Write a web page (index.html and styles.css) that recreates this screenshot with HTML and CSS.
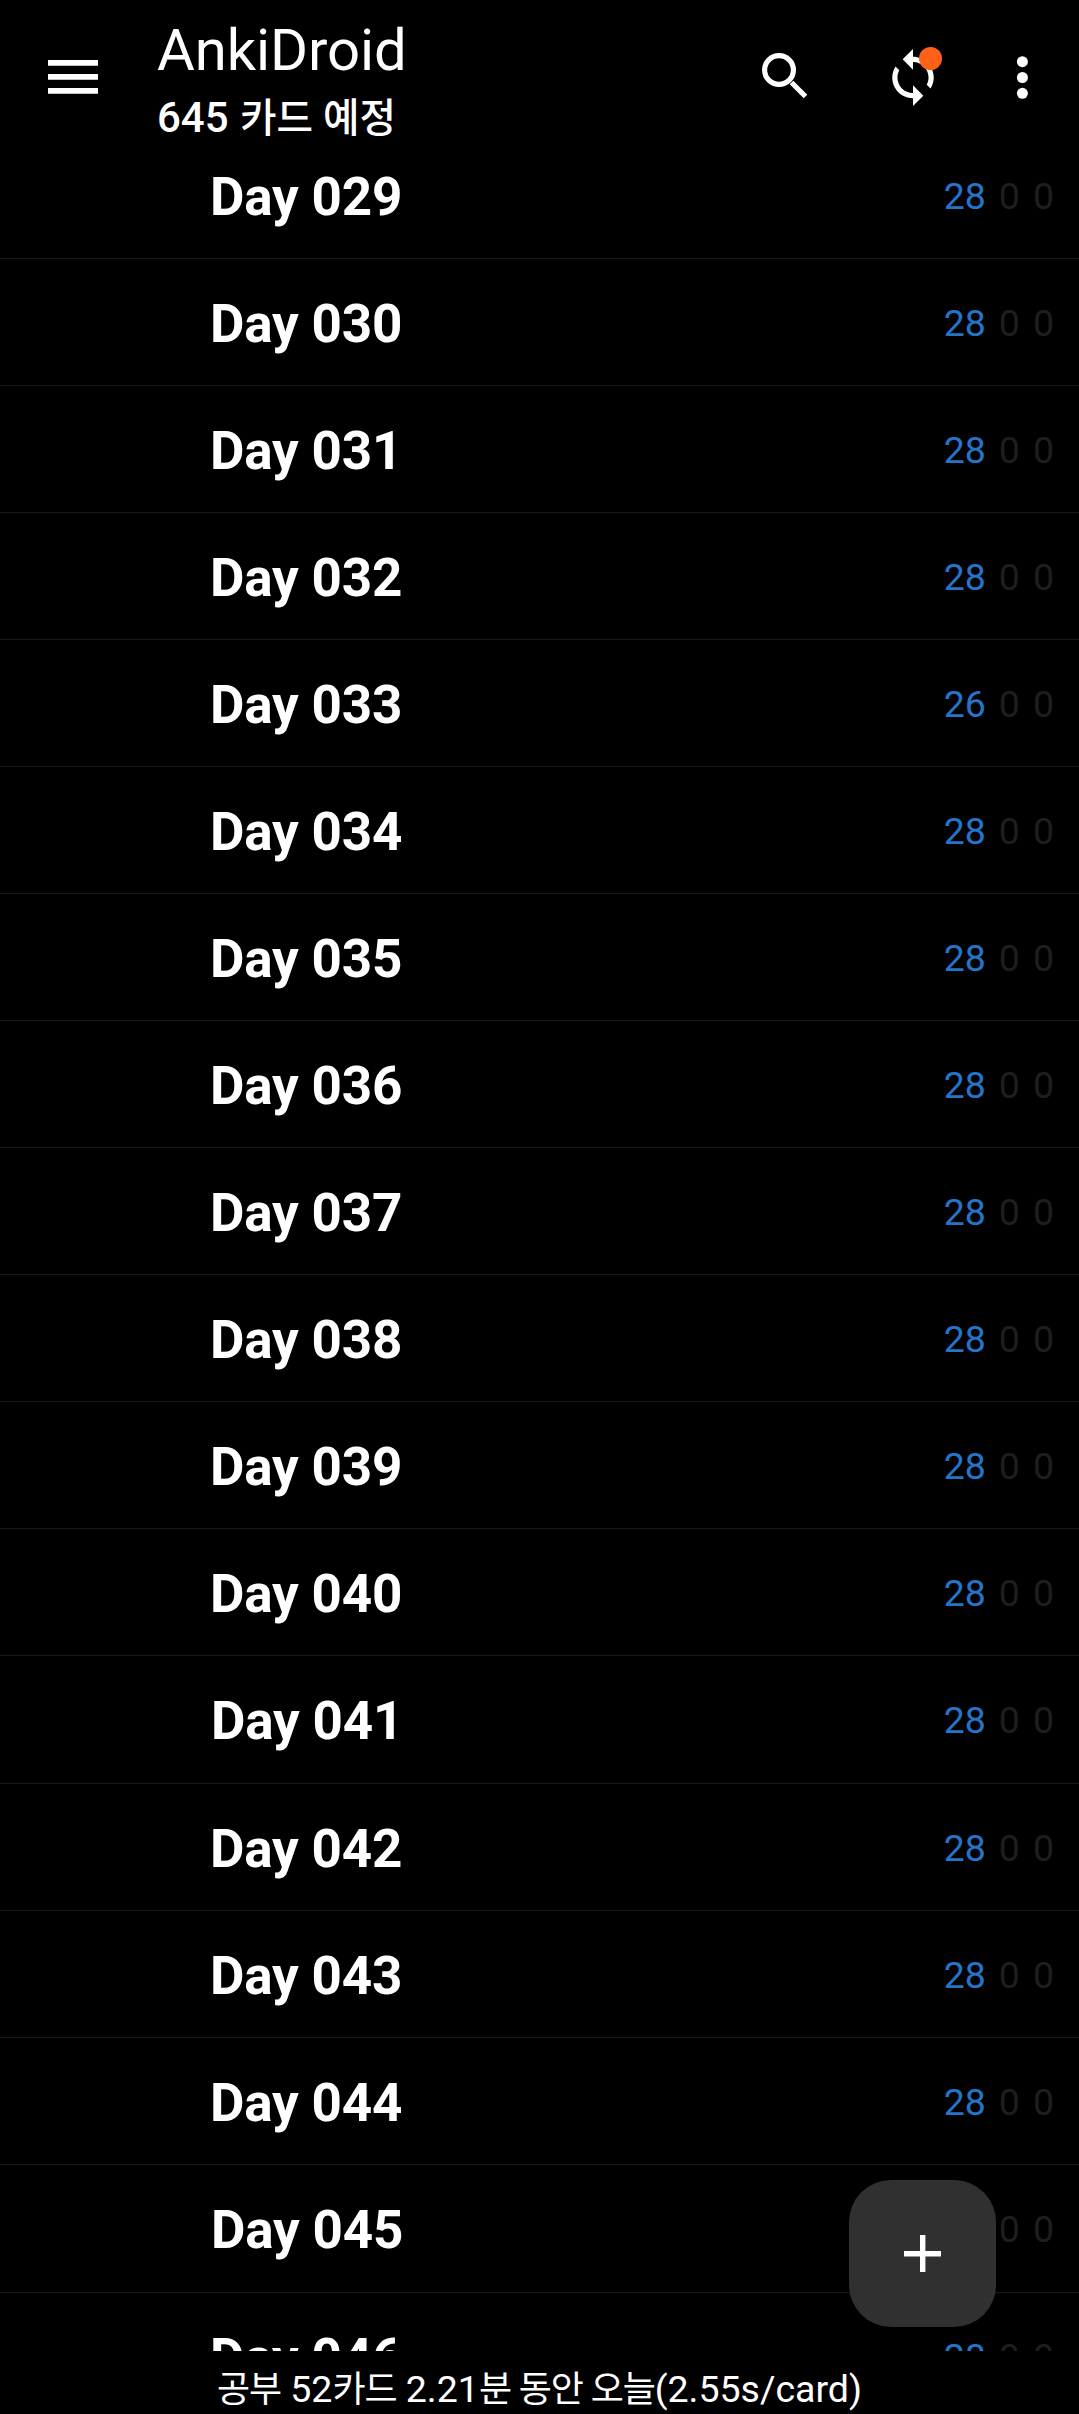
FILE: index.html
```
<!DOCTYPE html>
<html lang="ko">

<head>
    <meta charset="UTF-8">
    <meta name="viewport" content="width=device-width, initial-scale=1.0">
    <title>AnkiDroid</title>
    <link rel="stylesheet" href="styles.css">
</head>

<body>
    <header class="toolbar">
        <svg class="icon-menu" viewBox="0 0 50 34">
            <path d="M0 0h50v5.7H0zM0 14h50v5.7H0zM0 28h50v5.7H0z" />
        </svg>
        <div class="titles">
            <h1>AnkiDroid</h1>
            <p>645 <span class="ko">카드 예정</span></p>
        </div>
        <div class="actions">
            <svg class="icon-search" viewBox="0 0 46 46">
                <circle cx="17" cy="17" r="14.4" />
                <path d="M29.5 29.5L43.5 43.5" />
            </svg>
            <div class="sync">
                <svg class="icon-sync" viewBox="1 1 22 22">
                    <path d="M12 4V1L8 5l4 4V6c3.31 0 6 2.69 6 6 0 1.01-.25 1.97-.7 2.8l1.46 1.46C19.54 15.03 20 13.57 20 12c0-4.42-3.58-8-8-8zm0 14c-3.31 0-6-2.69-6-6 0-1.01.25-1.97.7-2.8L5.24 7.74C4.46 8.97 4 10.43 4 12c0 4.42 3.58 8 8 8v3l4-4-4-4v3z" />
                </svg>
                <span class="badge"></span>
            </div>
            <svg class="icon-more" viewBox="0 0 12 44">
                <circle cx="6.4" cy="5.7" r="5.5" />
                <circle cx="6.4" cy="21.5" r="5.5" />
                <circle cx="6.4" cy="37.3" r="5.5" />
            </svg>
        </div>
    </header>

    <main class="decks"></main>

    <button class="fab">
        <svg viewBox="0 0 37 37">
            <path d="M16 0h5.4v16H37v5.4H21.4V37H16V21.4H0V16h16z" />
        </svg>
    </button>

    <footer class="summary"><span class="ko">공부</span> 52<span class="ko">카드</span> 2.21<span class="ko">분 동안 오늘</span>(2.55s/card)</footer>

    <script>
        const decks = document.querySelector(".decks");

        for (let day = 29; day <= 46; day++) {
            const row = document.createElement("div");
            row.className = day === 41 || day === 45 ? "deck tall" : "deck";
            row.innerHTML = `
                <span class="name">Day 0${day}</span>
                <span class="new">${day === 33 ? 26 : 28}</span>
                <span class="zero">0</span>
                <span class="zero">0</span>`;
            decks.appendChild(row);
        }
    </script>
</body>

</html>
```

FILE: styles.css
```
body {
    display: flex;
    flex-direction: column;
    height: 2414px;
    margin: 0;
    overflow: hidden;
    background: #000;
    color: #fff;
    font-family: Roboto, "Noto Sans CJK KR", sans-serif;
}

.toolbar {
    display: flex;
    flex: none;
    box-sizing: border-box;
    height: 132px;
    padding-left: 48px;
}

.toolbar svg {
    display: block;
    flex: none;
    fill: #fff;
}

.icon-menu {
    width: 50px;
    height: 34px;
    margin-top: 60px;
}

.titles {
    margin-left: 59px;
    white-space: nowrap;
}

.titles h1 {
    margin: 15px 0 0;
    font-size: 58px;
    font-weight: 400;
    letter-spacing: -0.1px;
    line-height: 70px;
}

.titles p {
    margin: 8px 0 0;
    font-size: 42px;
    font-weight: 500;
    line-height: 50px;
}

.titles .ko {
    margin-left: 1px;
    font-size: 39.7px;
}

.actions {
    display: flex;
    margin-left: auto;
    padding-right: 51px;
}

.icon-search {
    width: 46px;
    height: 46px;
    margin-top: 53px;
}

.toolbar .icon-search {
    fill: none;
    stroke: #fff;
    stroke-width: 5.2;
}

.sync {
    position: relative;
    margin: 49px 0 0 76px;
}

.icon-sync {
    width: 58px;
    height: 57px;
}

.badge {
    position: absolute;
    top: -2px;
    left: 35px;
    width: 23px;
    height: 23px;
    border-radius: 50%;
    background: #ff6118;
}

.icon-more {
    width: 12px;
    height: 44px;
    margin: 56px 0 0 74px;
}

.decks {
    flex: 1;
    min-height: 0;
    overflow: hidden;
}

.deck {
    display: flex;
    align-items: center;
    box-sizing: border-box;
    height: 127px;
    padding: 2px 25px 0 210px;
    border-bottom: 1px solid #191919;
    font-size: 37.5px;
}

.tall {
    height: 128px;
    padding-bottom: 1px;
    padding-left: 211px;
}

.name {
    flex: 1;
    padding-top: 2px;
    font-size: 53px;
    font-weight: 700;
    letter-spacing: -0.2px;
}

.new {
    color: #2474c8;
}

.zero {
    margin-left: 13px;
    color: #1e1e1e;
}

.fab {
    display: flex;
    align-items: center;
    justify-content: center;
    position: absolute;
    top: 2180px;
    left: 849px;
    width: 147px;
    height: 147px;
    padding: 0;
    border: none;
    border-radius: 42px;
    background: #303030;
}

.fab svg {
    width: 37px;
    height: 37px;
    fill: #fff;
}

.summary {
    flex: none;
    height: 63px;
    overflow: hidden;
    font-size: 37.5px;
    line-height: 76px;
    text-align: center;
}

.summary .ko {
    font-size: 36px;
    letter-spacing: -1.1px;
}
```
